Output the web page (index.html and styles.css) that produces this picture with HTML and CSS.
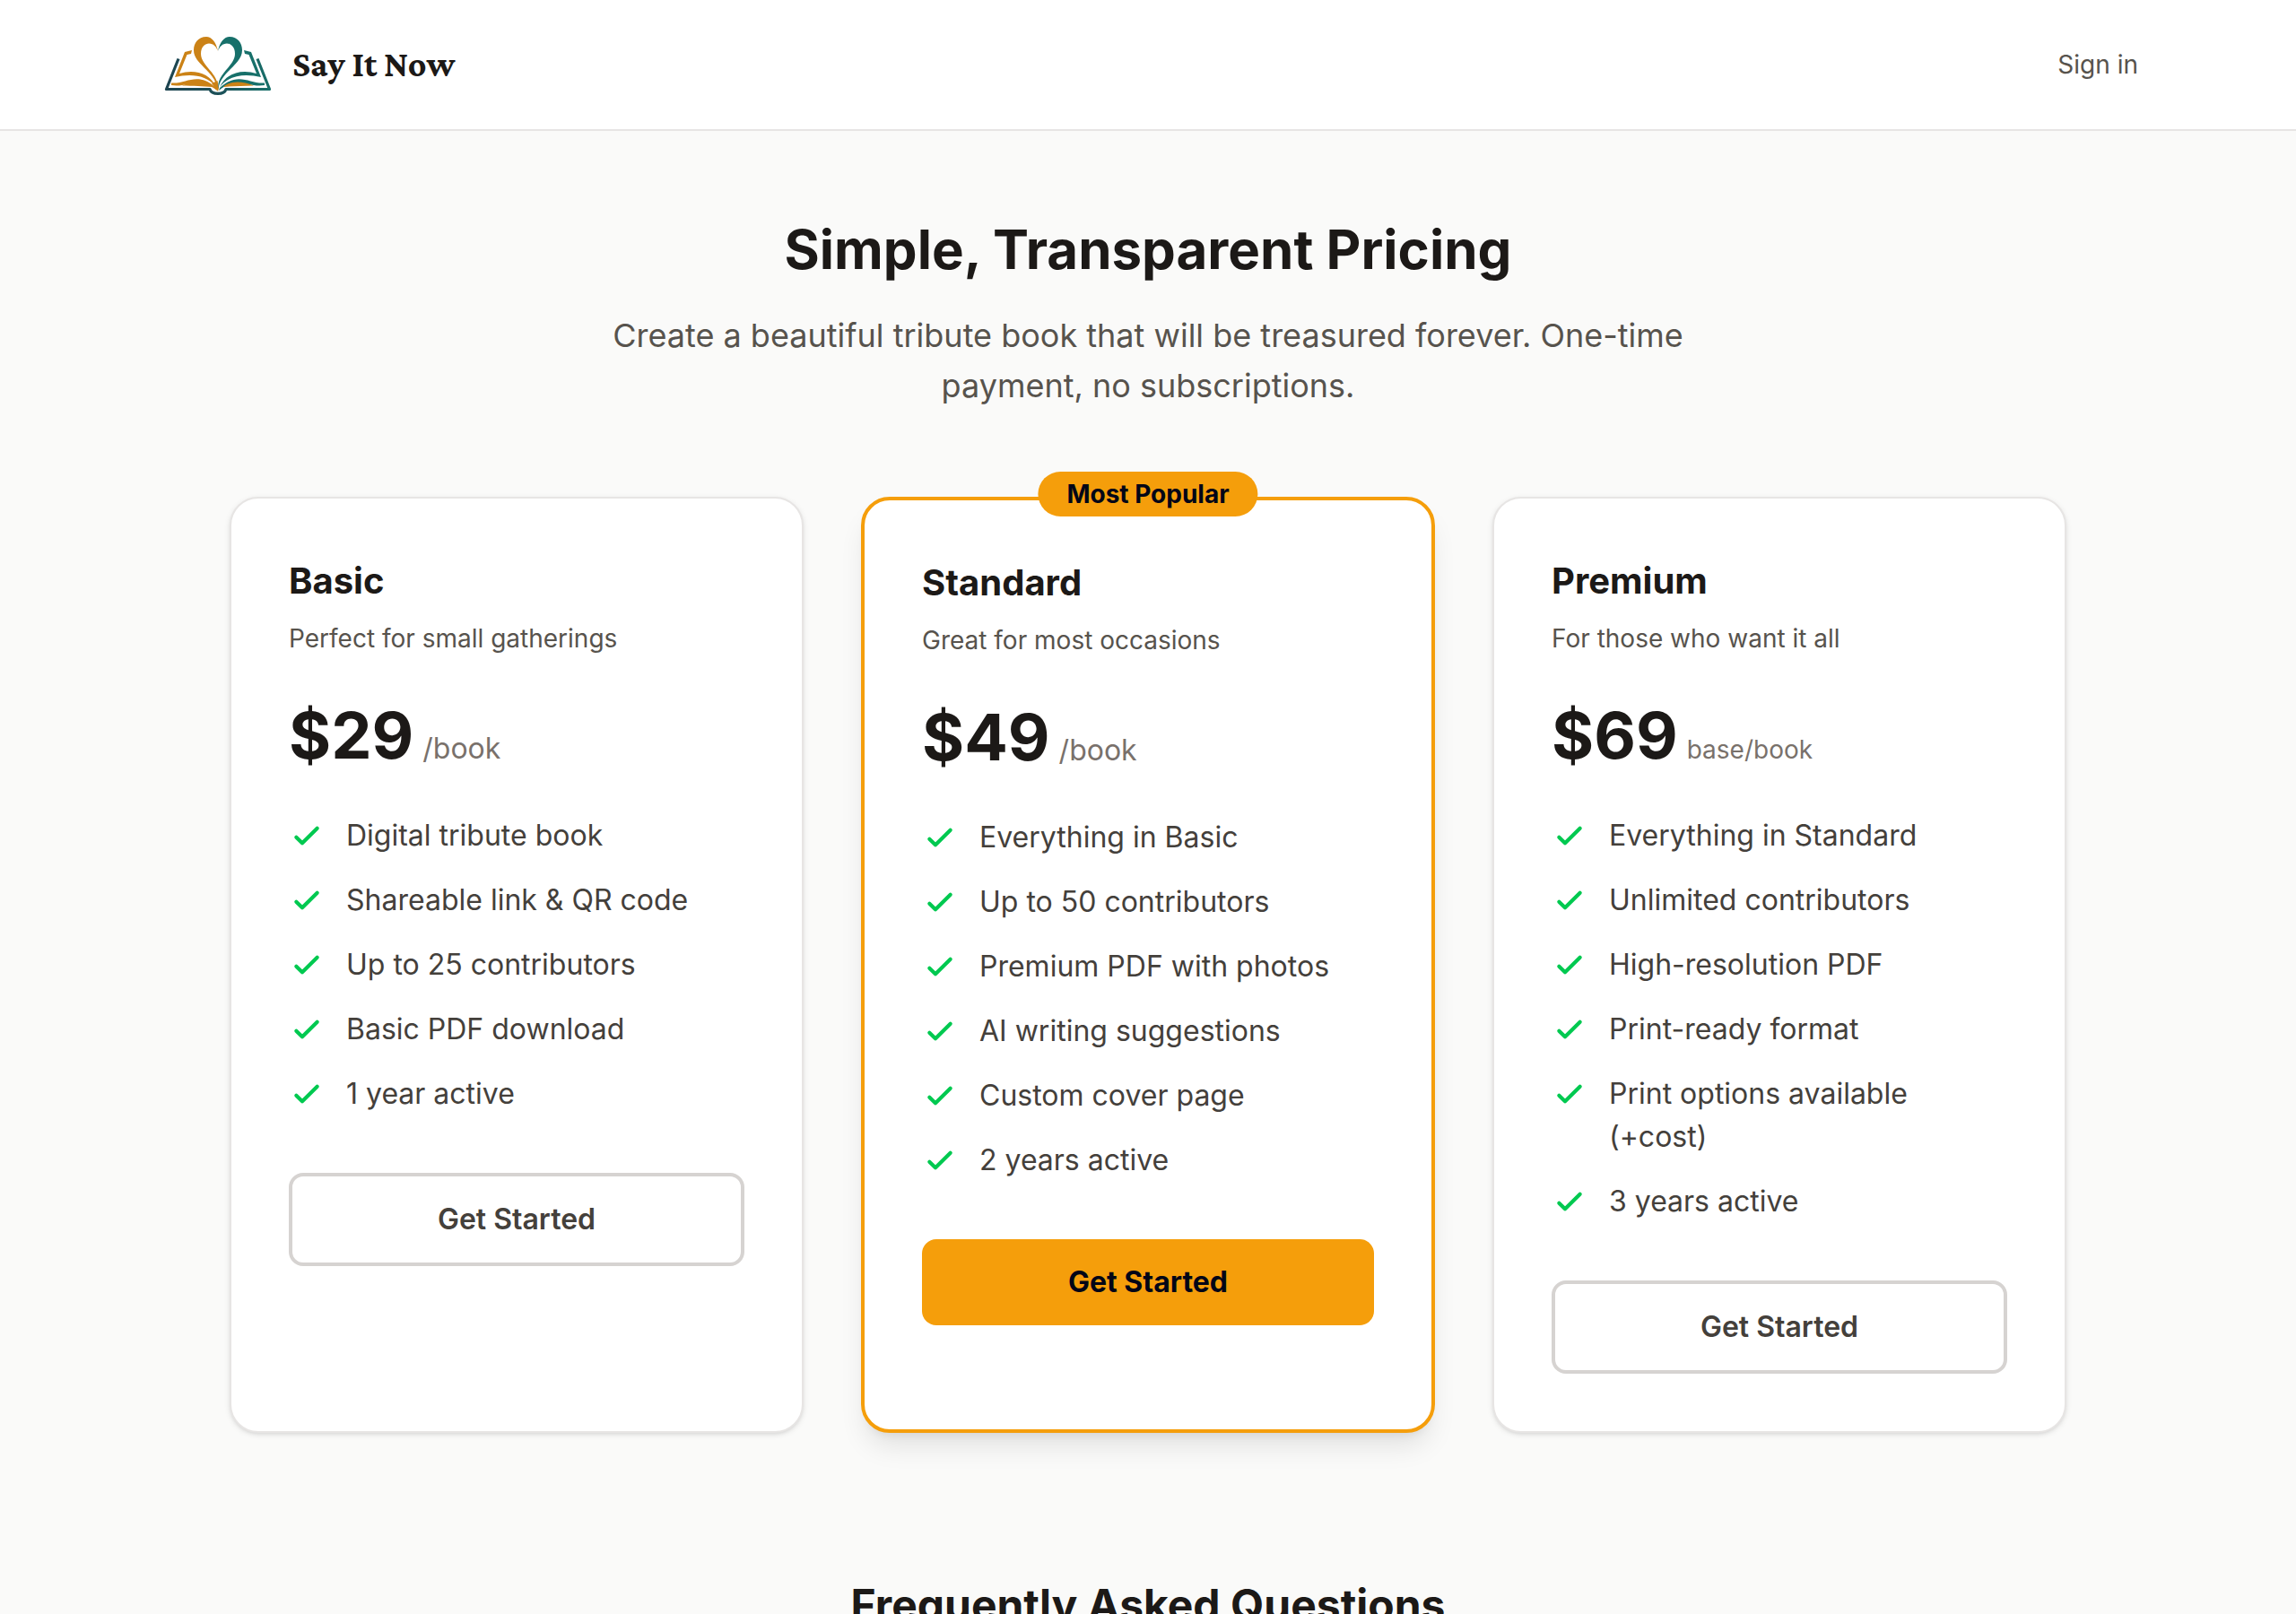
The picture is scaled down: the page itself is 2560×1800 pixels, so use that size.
FILE: index.html
```html
<!DOCTYPE html>
<html lang="en">
<head>
  <meta charset="UTF-8">
  <meta name="viewport" content="width=device-width, initial-scale=1">
  <title>Pricing - Say It Now</title>
  <link rel="stylesheet" href="styles.css">
</head>
<body>
  <!-- check mark shared by the feature lists -->
  <svg class="sprite" aria-hidden="true">
    <symbol id="check" viewBox="0 0 24 24">
      <path d="M5 13l4 4L19 7" fill="none" stroke="currentColor" stroke-width="2.5" stroke-linecap="round" stroke-linejoin="round"/>
    </symbol>
  </svg>

  <header class="site-header">
    <div class="header-inner">
      <a class="brand" href="#">
        <svg class="brand-logo" viewBox="0 0 134 80" aria-hidden="true">
          <defs>
            <linearGradient id="cover" gradientUnits="userSpaceOnUse" x1="8" x2="126" y1="0" y2="0">
              <stop offset="0" stop-color="#1d4450"/>
              <stop offset="0.5" stop-color="#1d5058"/>
              <stop offset="1" stop-color="#17706a"/>
            </linearGradient>
          </defs>
          <!-- cover -->
          <path d="M23 33.500L9.500 67.500H58C60 74 74 74 76 67.500H124.500L111 33.500" fill="none" stroke="url(#cover)" stroke-width="3.200" stroke-linejoin="round"/>
          <!-- left pages -->
          <g fill="#cb8216">
            <path d="M38 24L30 26L19 54C36 50 54 51 65 65C58 49 40 45 24 50L32.500 29L37 28Z"/>
            <path d="M15 60.500C32 62 44 47 65 66L66 69C46 52 34 66 15 63Z"/>
            <path d="M27 63.500C40 58 54 58 61 65C50 64 40 64 27 63.500Z"/>
          </g>
          <!-- right pages -->
          <g fill="#17706a">
            <path d="M96 24L104 26L115 54C98 50 80 51 69 65C76 49 94 45 110 50L101.500 29L97 28Z"/>
            <path d="M119 60.500C102 62 90 47 69 66L68 69C88 52 100 66 119 63Z"/>
          </g>
          <path d="M107 63.500C94 58 80 58 73 65C84 64 94 64 107 63.500Z" fill="#cb8216"/>
          <path d="M60 61L67 70L68 66L66.500 58Z" fill="#cb8216"/>
          <!-- heart -->
          <path d="M67 25C65 15 60 9 54 9C45 9 40 16 40 24C40 40 63 46 66.500 67C69 50 48 42 48 28C48 20 53 16.500 57 16.500C62 16.500 65 20 67 25Z" fill="#cb8216"/>
          <path d="M67 25C69 15 74 9 80 9C89 9 94 16 94 24C94 40 70 48 67.500 67C65 50 86 42 86 28C86 20 81 16.500 77 16.500C72 16.500 69 20 67 25Z" fill="#17706a"/>
        </svg>
        <span class="brand-name">Say It Now</span>
      </a>
      <a class="sign-in" href="#">Sign in</a>
    </div>
  </header>

  <main class="page">
    <div class="intro">
      <h1>Simple, Transparent Pricing</h1>
      <p>Create a beautiful tribute book that will be treasured forever. One-time payment, no subscriptions.</p>
    </div>

    <div class="plans">
      <section class="plan">
        <h2>Basic</h2>
        <p class="plan-desc">Perfect for small gatherings</p>
        <p class="price"><span class="amount">$29</span><span class="unit">/book</span></p>
        <ul class="features">
          <li><svg class="check"><use href="#check"/></svg><span>Digital tribute book</span></li>
          <li><svg class="check"><use href="#check"/></svg><span>Shareable link &amp; QR code</span></li>
          <li><svg class="check"><use href="#check"/></svg><span>Up to 25 contributors</span></li>
          <li><svg class="check"><use href="#check"/></svg><span>Basic PDF download</span></li>
          <li><svg class="check"><use href="#check"/></svg><span>1 year active</span></li>
        </ul>
        <button class="btn" type="button">Get Started</button>
      </section>

      <section class="plan plan-popular">
        <span class="badge">Most Popular</span>
        <h2>Standard</h2>
        <p class="plan-desc">Great for most occasions</p>
        <p class="price"><span class="amount">$49</span><span class="unit">/book</span></p>
        <ul class="features">
          <li><svg class="check"><use href="#check"/></svg><span>Everything in Basic</span></li>
          <li><svg class="check"><use href="#check"/></svg><span>Up to 50 contributors</span></li>
          <li><svg class="check"><use href="#check"/></svg><span>Premium PDF with photos</span></li>
          <li><svg class="check"><use href="#check"/></svg><span>AI writing suggestions</span></li>
          <li><svg class="check"><use href="#check"/></svg><span>Custom cover page</span></li>
          <li><svg class="check"><use href="#check"/></svg><span>2 years active</span></li>
        </ul>
        <button class="btn btn-primary" type="button">Get Started</button>
      </section>

      <section class="plan">
        <h2>Premium</h2>
        <p class="plan-desc">For those who want it all</p>
        <p class="price"><span class="amount">$69</span><span class="unit unit-small">base/book</span></p>
        <ul class="features">
          <li><svg class="check"><use href="#check"/></svg><span>Everything in Standard</span></li>
          <li><svg class="check"><use href="#check"/></svg><span>Unlimited contributors</span></li>
          <li><svg class="check"><use href="#check"/></svg><span>High-resolution PDF</span></li>
          <li><svg class="check"><use href="#check"/></svg><span>Print-ready format</span></li>
          <li><svg class="check"><use href="#check"/></svg><span>Print options available (+cost)</span></li>
          <li><svg class="check"><use href="#check"/></svg><span>3 years active</span></li>
        </ul>
        <button class="btn" type="button">Get Started</button>
      </section>
    </div>

    <section class="faq">
      <h2>Frequently Asked Questions</h2>
    </section>
  </main>
</body>
</html>
```
FILE: styles.css
```css
* { box-sizing: border-box; margin: 0; padding: 0; }
body { font-family: Inter, "Liberation Sans", sans-serif; font-size: 32px; line-height: 48px; background: #fafaf9; color: #1c1917; }
a { color: inherit; text-decoration: none; }
ul { list-style: none; }
.sprite { display: none; }

/* Header */
.site-header { background: #fff; border-bottom: 2px solid #e7e5e4; }
.header-inner { max-width: 2304px; margin: 0 auto; padding: 32px 48px; display: flex; align-items: center; justify-content: space-between; }
.brand { display: flex; align-items: center; gap: 16px; }
.brand-logo { display: block; width: 134px; height: 80px; }
.brand-name { font-family: "Crimson Pro", "Liberation Serif", serif; font-size: 40px; font-weight: 700; }
.sign-in { font-size: 28px; line-height: 40px; color: #57534d; }

/* Intro */
.page { max-width: 2144px; margin: 0 auto; padding: 96px 48px; }
.intro { text-align: center; margin-bottom: 96px; }
.intro h1 { font-size: 60px; line-height: 72px; margin-bottom: 32px; }
.intro p { max-width: 1344px; margin: 0 auto; font-size: 36px; line-height: 56px; color: #57534d; }

/* Plans */
.plans { display: grid; grid-template-columns: repeat(3, 1fr); gap: 64px; }
.plan { position: relative; background: #fff; border: 2px solid #e7e5e4; border-radius: 32px; padding: 64px; box-shadow: 0 2px 6px rgba(0,0,0,0.1), 0 2px 4px -2px rgba(0,0,0,0.1); }
.plan-popular { border: 4px solid #f59e0b; box-shadow: 0 20px 30px -6px rgba(0,0,0,0.1), 0 8px 12px -8px rgba(0,0,0,0.1); }
.badge { position: absolute; top: -32px; left: 50%; transform: translateX(-50%); padding: 8px 32px; border-radius: 32px; background: #f59e0b; color: #020617; font-size: 28px; line-height: 34px; font-weight: 700; white-space: nowrap; }
.plan h2 { font-size: 40px; line-height: 56px; font-weight: 700; margin-bottom: 16px; }
.plan-desc { font-size: 28px; line-height: 40px; color: #57534d; margin-bottom: 48px; }
.price { display: flex; align-items: baseline; gap: 10px; margin-bottom: 48px; }
.amount { font-size: 72px; line-height: 80px; font-weight: 700; }
.unit { color: #79716b; }
.unit-small { font-size: 28px; }
.features { display: flex; flex-direction: column; gap: 24px; margin-bottom: 64px; color: #44403b; }
.features li { display: flex; align-items: flex-start; gap: 24px; }
.check { flex-shrink: 0; width: 40px; height: 40px; margin-top: 4px; color: #00c950; }
.btn { display: block; width: 100%; padding: 24px; border: 4px solid #d6d3d1; border-radius: 16px; background: #fff; color: #44403b; font: inherit; font-weight: 600; cursor: pointer; }
.btn-primary { border: none; background: #f59e0b; color: #020617; font-weight: 700; }

/* FAQ */
.faq { margin-top: 160px; text-align: center; }
.faq h2 { font-size: 48px; line-height: 64px; }
```
